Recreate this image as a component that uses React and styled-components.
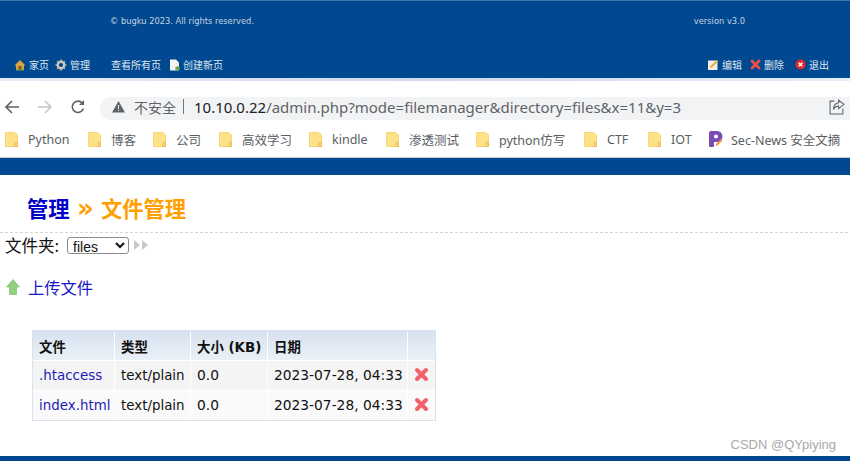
import styled, { createGlobalStyle } from "styled-components";

const GlobalStyle = createGlobalStyle`
  html, body {
    margin: 0;
    padding: 0;
    background: #fff;
    overflow: hidden;
  }
  body {
    font-family: "Liberation Sans", "Noto Sans CJK SC", sans-serif;
  }
`;

const leftNav = [
  { icon: "home", label: "家页" },
  { icon: "gear", label: "管理", gap: 6 },
  { label: "查看所有页", gap: 21 },
  { icon: "page", label: "创建新页", gap: 8 },
];
const rightNav = [
  { icon: "edit", label: "编辑" },
  { icon: "cross", label: "删除", gap: 8 },
  { icon: "exit", label: "退出", gap: 11 },
];
const bookmarks = [
  { label: "Python", w: 83 },
  { label: "博客", w: 65 },
  { label: "公司", w: 66 },
  { label: "高效学习", w: 90 },
  { label: "kindle", w: 77 },
  { label: "渗透测试", w: 90 },
  { label: "python仿写", w: 108 },
  { label: "CTF", w: 64 },
  { label: "IOT", w: 60 },
];
const files = [
  { name: ".htaccess", type: "text/plain", size: "0.0", date: "2023-07-28, 04:33" },
  { name: "index.html", type: "text/plain", size: "0.0", date: "2023-07-28, 04:33" },
];

const NavIcon = ({ kind }) => {
  if (kind === "home")
    return (
      <svg width="12" height="12" viewBox="0 0 12 12">
        <path d="M6 1 11.500 6.500H10V11H2V6.500H.5z" fill="#d9a441" />
        <path d="M4.500 7h3v4h-3z" fill="#7a5a2a" />
        <path d="M2 10.500h8V11.500H2z" fill="#6aa84f" />
      </svg>
    );
  if (kind === "gear")
    return (
      <svg width="12" height="12" viewBox="0 0 12 12">
        <circle cx="6" cy="6" r="3.300" fill="none" stroke="#cfc8bc" strokeWidth="2.400" />
        <path d="M6 .5v2M6 9.500v2M.5 6h2M9.500 6h2M2.200 2.200l1.400 1.400M8.400 8.400l1.400 1.400M2.200 9.800l1.400-1.400M8.400 3.600l1.400-1.400" stroke="#bdb6aa" strokeWidth="1.600" />
      </svg>
    );
  if (kind === "page")
    return (
      <svg width="11" height="12" viewBox="0 0 11 12">
        <path d="M1 .5h6l3 3v8H1z" fill="#f4f4f4" />
        <circle cx="8.500" cy="9.500" r="2.300" fill="#6aa84f" />
      </svg>
    );
  if (kind === "edit")
    return (
      <svg width="12" height="12" viewBox="0 0 12 12">
        <path d="M1 1.500h9.500V11H1z" fill="#f1efe6" />
        <path d="M3 9l.6-2.200L9.800 1l1.400 1.400L5.100 8.300z" fill="#e3b23c" />
      </svg>
    );
  if (kind === "cross")
    return (
      <svg width="11" height="11" viewBox="0 0 11 11">
        <path d="M2 2l7 7M9 2 2 9" stroke="#ee4d4d" strokeWidth="2.800" strokeLinecap="round" />
      </svg>
    );
  return (
    <svg width="11" height="11" viewBox="0 0 11 11">
      <circle cx="5.500" cy="5.500" r="5" fill="#e8262c" />
      <path d="M3.700 3.700l3.600 3.600M7.300 3.700 3.700 7.300" stroke="#fff" strokeWidth="1.500" />
    </svg>
  );
};

const FolderIcon = () => (
  <svg width="13" height="15" viewBox="0 0 13 15">
    <path d="M.5.500h9l3 2.500v11.500H.5z" fill="#fde28a" stroke="#f8d672" />
    <path d="M10 10.500h2.500v4H10z" fill="none" stroke="#e8bb4c" strokeWidth="1" />
  </svg>
);

const DeleteIcon = () => (
  <svg width="15" height="15" viewBox="0 0 15 15">
    <path d="M3 3l9 9M12 3l-9 9" stroke="#f2626a" strokeWidth="4" strokeLinecap="round" />
  </svg>
);

const App = () => (
  <Page>
    <GlobalStyle />
    <TopBar>
      <CopyRow>
        <span>© bugku 2023. All rights reserved.</span>
        <span>version v3.0</span>
      </CopyRow>
      <NavRow>
        <NavGroup>
          {leftNav.map((item) => (
            <NavItem key={item.label} $gap={item.gap}>
              {item.icon && <NavIcon kind={item.icon} />}
              {item.label}
            </NavItem>
          ))}
        </NavGroup>
        <NavGroup>
          {rightNav.map((item) => (
            <NavItem key={item.label} $gap={item.gap}>
              <NavIcon kind={item.icon} />
              {item.label}
            </NavItem>
          ))}
        </NavGroup>
      </NavRow>
    </TopBar>
    <Stripe />
    <Toolbar>
      <ToolIcons>
        <svg width="16" height="16" viewBox="0 0 16 16" fill="none" stroke="#5f6368" strokeWidth="1.600">
          <path d="M15 8H2M8 2 2 8l6 6" />
        </svg>
        <svg width="16" height="16" viewBox="0 0 16 16" fill="none" stroke="#c4c7ca" strokeWidth="1.600">
          <path d="M1 8h13M8 2l6 6-6 6" />
        </svg>
        <svg width="16" height="16" viewBox="0 0 16 16" fill="none" stroke="#5f6368" strokeWidth="1.600">
          <path d="M13.400 9.500A5.700 5.700 0 1 1 12.300 4.100" />
          <path d="M14 1v5H9z" fill="#5f6368" stroke="none" />
        </svg>
      </ToolIcons>
      <Omnibox>
        <svg width="13" height="12" viewBox="0 0 13 12">
          <path d="M6.500 0 13 11.500H0z" fill="#5f6368" />
          <path d="M6 4h1v4H6zM6 9h1v1H6z" fill="#f1f3f4" />
        </svg>
        <Insecure>不安全</Insecure>
        <Divider />
        <Url>
          <b>10.10.0.22</b>/admin.php?mode=filemanager&amp;directory=files&amp;x=11&amp;y=3
        </Url>
        <Share width="16" height="16" viewBox="0 0 15 15" fill="none" stroke="#5f6368" strokeWidth="1">
          <path d="M5 2H1v12h12V9" />
          <path d="M9 1l5 4-5 4V6.700C6.500 6.700 5 8 4.200 10 4.200 6.500 6 4 9 3.500z" />
        </Share>
      </Omnibox>
    </Toolbar>
    <Bookmarks>
      {bookmarks.map((b) => (
        <Bookmark key={b.label} $w={b.w}>
          <FolderIcon />
          <span>{b.label}</span>
        </Bookmark>
      ))}
      <Bookmark $tight>
        <svg width="15" height="18" viewBox="0 0 15 18">
          <path d="M1 3a2 2 0 0 1 2-2h6a5.500 5.500 0 0 1 0 11H6v4a1 1 0 0 1-1 1H2a1 1 0 0 1-1-1z" fill="#7b4bb5" />
          <circle cx="8" cy="6.500" r="2" fill="#fff" />
          <path d="M8 14l5-5 1.500 1.500-5 5-2 .5z" fill="#e59a3c" />
        </svg>
        <span>Sec-News 安全文摘</span>
      </Bookmark>
    </Bookmarks>
    <BlueBand />
    <Content>
      <Heading>
        管理<Chevron>»</Chevron>
        <Crumb>文件管理</Crumb>
      </Heading>
      <FolderRow>
        文件夹:
        <FolderSelect defaultValue="files">
          <option value="files">files</option>
        </FolderSelect>
        <svg width="15" height="10" viewBox="0 0 15 10">
          <path d="M0 0l6 5-6 5zM8 0l6 5-6 5z" fill="#c8c8c8" />
        </svg>
      </FolderRow>
      <UploadRow>
        <svg width="14" height="16" viewBox="0 0 14 16">
          <path d="M7 .5 13.500 8H10.500v7.500H3.500V8H.5z" fill="#8fcf7f" stroke="#7cb96c" strokeWidth=".6" strokeLinejoin="round" />
        </svg>
        <UploadLink>上传文件</UploadLink>
      </UploadRow>
      <TableWrap>
        <FileTable>
          <thead>
            <tr>
              <HeadCell $w={82}>文件</HeadCell>
              <HeadCell $w={76}>类型</HeadCell>
              <HeadCell $w={77}>大小 (KB)</HeadCell>
              <HeadCell $w={140}>日期</HeadCell>
              <HeadCell $w={27} />
            </tr>
          </thead>
          <tbody>
            {files.map((f, i) => (
              <tr key={f.name}>
                <Cell $odd={i === 0}>
                  <FileLink>{f.name}</FileLink>
                </Cell>
                <Cell $odd={i === 0}>{f.type}</Cell>
                <Cell $odd={i === 0} $num>{f.size}</Cell>
                <Cell $odd={i === 0} $num>{f.date}</Cell>
                <Cell $odd={i === 0} $icon>
                  <DeleteIcon />
                </Cell>
              </tr>
            ))}
          </tbody>
        </FileTable>
      </TableWrap>
      <Watermark>CSDN @QYpiying</Watermark>
    </Content>
    <BottomBar />
  </Page>
);

export default App;

const Page = styled.div`
  width: 850px;
  height: 461px;
  display: flex;
  flex-direction: column;
  overflow: hidden;
`;
const TopBar = styled.div`
  height: 77px;
  flex: none;
  background: #004990;
  border-top: 1px solid #3d76a8;
  display: flex;
  flex-direction: column;
  color: #c4d2e2;
`;
const CopyRow = styled.div`
  padding: 14px 105px 0 110px;
  display: flex;
  justify-content: space-between;
  font-family: "DejaVu Sans", sans-serif;
  font-size: 8.300px;
  line-height: 12px;
`;
const NavRow = styled.div`
  margin-top: auto;
  padding: 0 21px 7px 14px;
  display: flex;
  justify-content: space-between;
  font-family: "Noto Sans CJK SC", sans-serif;
  font-size: 10px;
  line-height: 13px;
  color: #dde6f0;
`;
const NavGroup = styled.div`
  display: flex;
`;
const NavItem = styled.div`
  display: flex;
  align-items: center;
  gap: 3px;
  margin-left: ${({ $gap }) => $gap || 0}px;
`;
const Stripe = styled.div`
  height: 3px;
  flex: none;
  background: linear-gradient(90deg, #e4ecf8, #d0d8ee 50%, #e4eefa);
`;
const Toolbar = styled.div`
  height: 43px;
  flex: none;
  display: flex;
  align-items: center;
  padding: 12px 0 0 4px;
  box-sizing: border-box;
  background: #fff;
`;
const ToolIcons = styled.div`
  display: flex;
  gap: 17px;
  width: 96px;
  flex: none;
  margin-bottom: 3px;
`;
const Omnibox = styled.div`
  height: 23px;
  flex: 1;
  box-sizing: border-box;
  background: #f1f3f4;
  border-radius: 12px 0 0 12px;
  display: flex;
  align-items: center;
  padding: 0 5px 4px 12px;
`;
const Insecure = styled.span`
  margin-left: 9px;
  font-family: "Noto Sans CJK SC", sans-serif;
  font-size: 14px;
  color: #5f6368;
`;
const Divider = styled.span`
  width: 1px;
  height: 15px;
  margin: 0 10px 0 7px;
  background: #70757a;
`;
const Url = styled.span`
  font-family: "Noto Sans", sans-serif;
  font-size: 15px;
  color: #5f6368;
  white-space: nowrap;
  & b {
    font-weight: 400;
    color: #202124;
  }
`;
const Share = styled.svg`
  margin-left: auto;
`;
const Bookmarks = styled.div`
  height: 33px;
  flex: none;
  box-sizing: content-box;
  padding: 0 0 0 5px;
  display: flex;
  align-items: flex-start;
  border-bottom: 1px solid #c9cbce;
  overflow: hidden;
`;
const Bookmark = styled.div`
  width: ${({ $w }) => ($w ? `${$w}px` : "auto")};
  height: 30px;
  flex: none;
  display: flex;
  align-items: center;
  gap: ${({ $tight }) => ($tight ? "8px" : "10px")};
  font-family: "Noto Sans", "Noto Sans CJK SC", sans-serif;
  font-size: 12.500px;
  color: #5a5e63;
  white-space: nowrap;
`;
const BlueBand = styled.div`
  height: 17px;
  flex: none;
  background: #004990;
`;
const Content = styled.div`
  position: relative;
  flex: 1;
  min-height: 0;
  display: flex;
  flex-direction: column;
`;
const Heading = styled.h1`
  margin: 0 2px 0 0;
  height: 58px;
  box-sizing: border-box;
  padding: 21px 0 0 27px;
  border-bottom: 1px dashed #d4d4d4;
  display: flex;
  font-family: "Liberation Sans", "Noto Sans CJK SC", sans-serif;
  font-size: 21.300px;
  line-height: 28px;
  font-weight: 700;
  color: #0000c8;
`;
const Chevron = styled.span`
  margin: 0 7px 0 7.500px;
  font-family: "DejaVu Sans", sans-serif;
  font-size: 26px;
  line-height: 24px;
  color: #ffa000;
`;
const Crumb = styled.span`
  color: #ffa000;
`;
const FolderRow = styled.div`
  height: 24px;
  padding-left: 5px;
  display: flex;
  align-items: center;
  font-family: "Noto Sans CJK SC", sans-serif;
  font-size: 16.500px;
  color: #111;
  & svg {
    margin-left: 5px;
  }
`;
const FolderSelect = styled.select`
  width: 62px;
  height: 17px;
  margin-left: 8px;
  padding: 0 0 0 1px;
  box-sizing: border-box;
  border: 1px solid #8a8a8a;
  border-radius: 3px;
  background: #fff;
  font-family: "Liberation Sans", sans-serif;
  font-size: 14px;
  color: #111;
`;
const UploadRow = styled.div`
  margin-top: 18px;
  padding-left: 6px;
  display: flex;
  align-items: center;
  gap: 8px;
  height: 24px;
`;
const UploadLink = styled.a`
  font-family: "Noto Sans CJK SC", sans-serif;
  font-size: 16.250px;
  color: #1818c8;
`;
const TableWrap = styled.div`
  margin: 31px 0 0 32px;
  width: 404px;
`;
const FileTable = styled.table`
  width: 404px;
  table-layout: fixed;
  border-collapse: separate;
  border-spacing: 0;
  border: 1px solid #d9e3f0;
  border-top-width: 2px;
  font-family: "DejaVu Sans", "Noto Sans CJK SC", sans-serif;
  font-size: 13.400px;
  color: #111;
`;
const HeadCell = styled.th`
  width: ${({ $w }) => $w}px;
  height: 28px;
  padding: 0 0 0 6px;
  box-sizing: border-box;
  text-align: left;
  font-weight: 700;
  white-space: nowrap;
  background: linear-gradient(180deg, #d8e2ef, #eaf0f7);
  border-right: 1px solid #fff;
  &:last-child {
    border-right: none;
  }
`;
const Cell = styled.td`
  height: 30px;
  padding: ${({ $icon }) => ($icon ? "1px 0 0 6px" : "0 0 1px 6px")};
  box-sizing: border-box;
  white-space: nowrap;
  font-size: ${({ $num }) => ($num ? "13.800px" : "inherit")};
  background: ${({ $odd }) => ($odd ? "#f4f4f4" : "#fafafa")};
  border-right: 1px solid #fff;
  border-top: 1px solid #fff;
  &:last-child {
    border-right: none;
  }
`;
const FileLink = styled.a`
  color: #1c1cb4;
`;
const Watermark = styled.div`
  position: absolute;
  right: 14px;
  bottom: 4px;
  font-family: "Liberation Sans", sans-serif;
  font-size: 13px;
  color: #a9a9a9;
`;
const BottomBar = styled.div`
  height: 5px;
  flex: none;
  background: #004990;
`;
